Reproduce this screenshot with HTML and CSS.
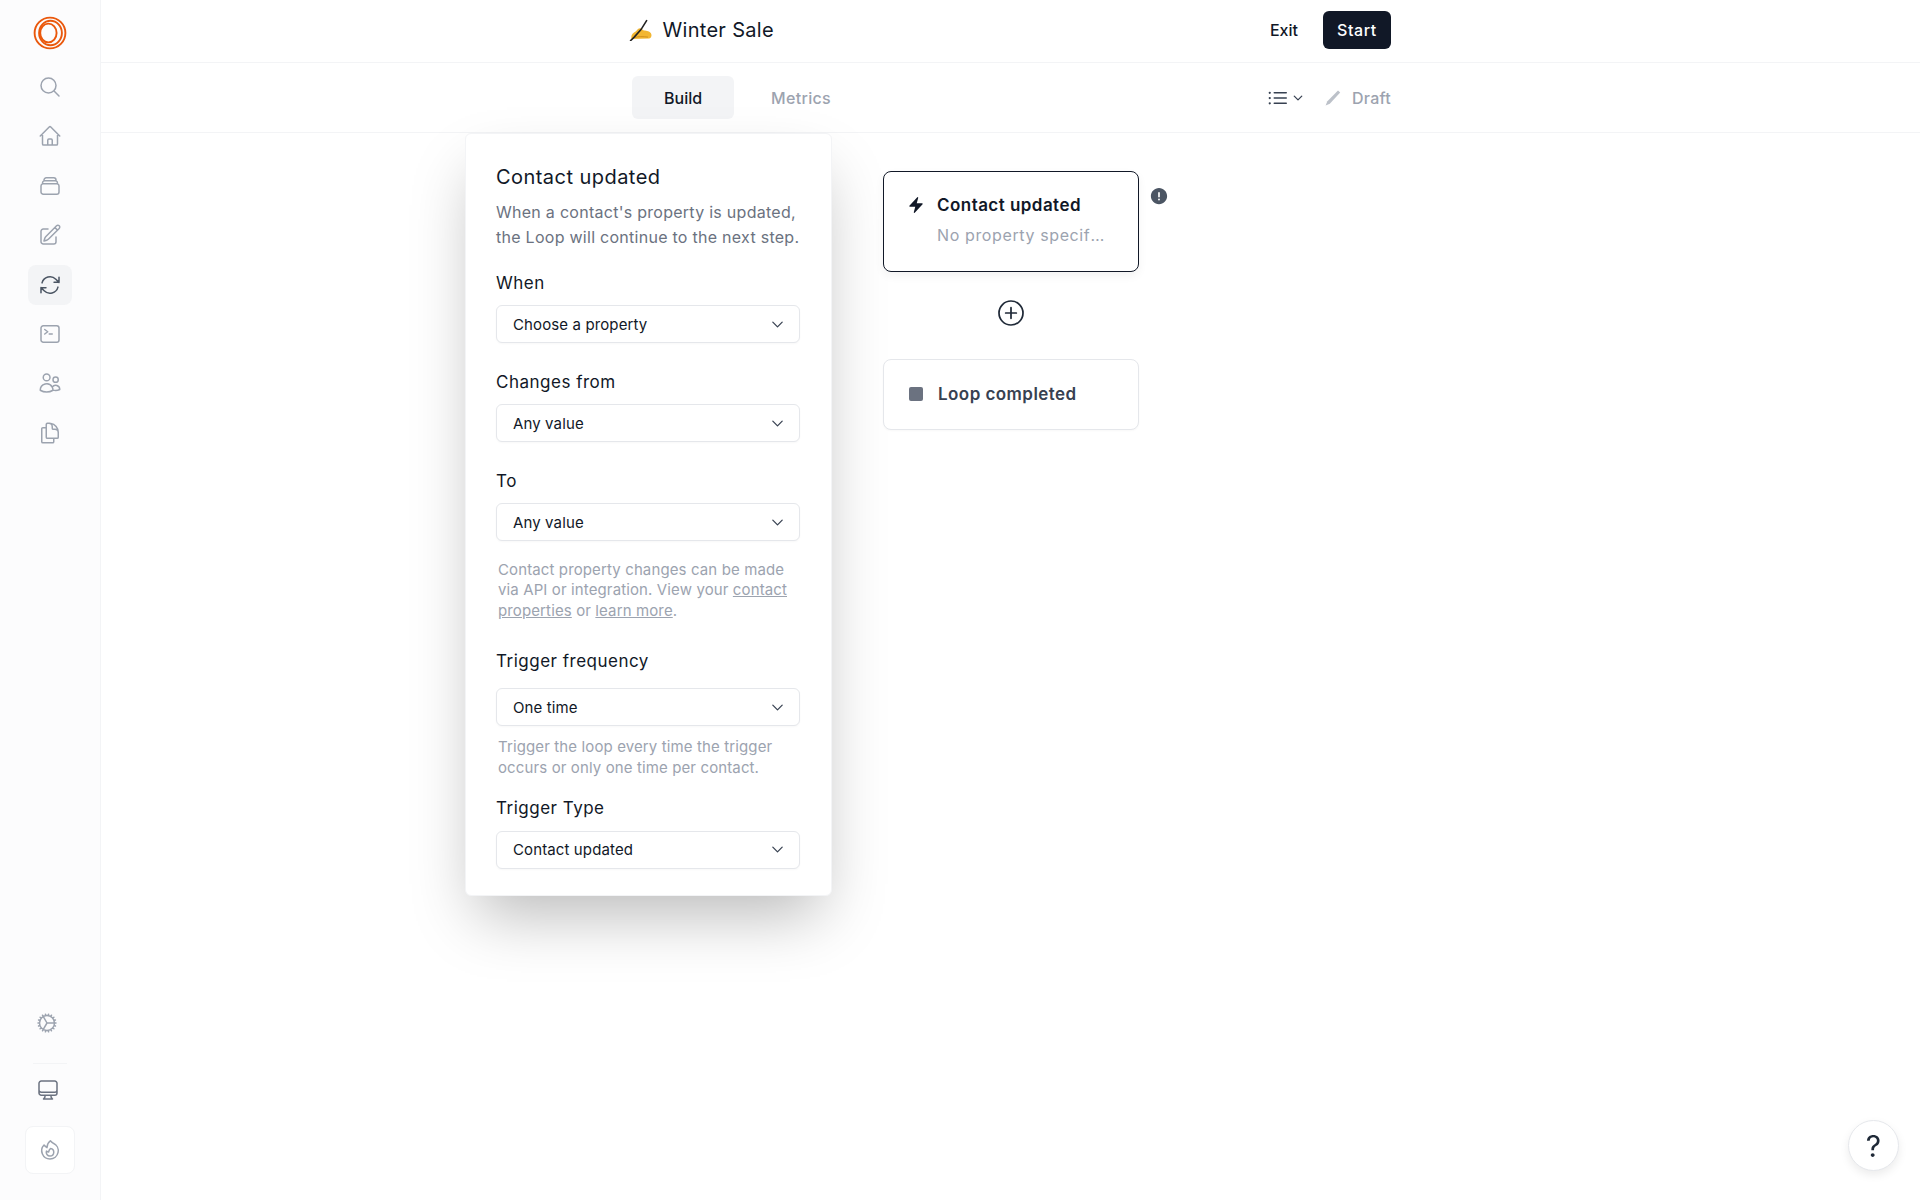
FILE: index.html
```html
<!DOCTYPE html>
<html lang="en">
<head>
<meta charset="utf-8">
<title>Winter Sale</title>
<link rel="stylesheet" href="styles.css">
</head>
<body>
<div class="app">
  <aside class="sidebar">
    <div class="logo">
      <svg viewBox="0 0 34 34" width="34" height="34" fill="none" stroke="#ea580c" stroke-width="1.9">
        <circle cx="17" cy="17" r="15.4"/>
        <ellipse cx="17.5" cy="17" rx="11.4" ry="12.2"/>
        <ellipse cx="15.4" cy="17" rx="8.2" ry="9.4"/>
      </svg>
    </div>
    <nav class="nav">
      <a class="nav-item"><svg class="ico" viewBox="0 0 24 24"><path d="m21 21-5.197-5.197m0 0A7.5 7.5 0 1 0 5.196 5.196a7.5 7.5 0 0 0 10.607 10.607Z"/></svg></a>
      <a class="nav-item"><svg class="ico" viewBox="0 0 24 24"><path d="m2.25 12 8.954-8.955c.44-.439 1.152-.439 1.591 0L21.75 12M4.5 9.75v10.125c0 .621.504 1.125 1.125 1.125H9.75v-4.875c0-.621.504-1.125 1.125-1.125h2.25c.621 0 1.125.504 1.125 1.125V21h4.125c.621 0 1.125-.504 1.125-1.125V9.75M8.25 21h8.25"/></svg></a>
      <a class="nav-item"><svg class="ico" viewBox="0 0 24 24"><path d="M6 6.878V6a2.25 2.25 0 0 1 2.25-2.25h7.5A2.25 2.25 0 0 1 18 6v.878m-12 0c.235-.083.487-.128.75-.128h10.5c.263 0 .515.045.75.128m-12 0A2.25 2.25 0 0 0 4.5 9v.878m13.5-3A2.25 2.25 0 0 1 19.5 9v.878m0 0a2.246 2.246 0 0 0-.75-.128H5.25c-.263 0-.515.045-.75.128m15 0A2.25 2.25 0 0 1 21 12v6a2.25 2.25 0 0 1-2.25 2.25H5.25A2.25 2.25 0 0 1 3 18v-6c0-.98.626-1.813 1.5-2.122"/></svg></a>
      <a class="nav-item"><svg class="ico" viewBox="0 0 24 24"><path d="m16.862 4.487 1.687-1.688a1.875 1.875 0 1 1 2.652 2.652L10.582 16.07a4.5 4.5 0 0 1-1.897 1.13L6 18l.8-2.685a4.5 4.5 0 0 1 1.13-1.897l8.932-8.931Zm0 0L19.5 7.125M18 14v4.75A2.25 2.25 0 0 1 15.75 21H5.25A2.25 2.25 0 0 1 3 18.75V8.25A2.25 2.25 0 0 1 5.25 6H10"/></svg></a>
      <a class="nav-item active"><svg class="ico" viewBox="0 0 24 24"><path d="M16.023 9.348h4.992v-.001M2.985 19.644v-4.992m0 0h4.992m-4.993 0 3.181 3.183a8.25 8.25 0 0 0 13.803-3.7M4.031 9.865a8.25 8.25 0 0 1 13.803-3.7l3.181 3.182m0-4.991v4.99"/></svg></a>
      <a class="nav-item"><svg class="ico" viewBox="0 0 24 24"><path d="m6.75 7.5 3 2.25-3 2.25m4.5 0h3m-9 8.25h13.5A2.25 2.25 0 0 0 21 18V6a2.25 2.25 0 0 0-2.25-2.25H5.25A2.25 2.25 0 0 0 3 6v12a2.25 2.25 0 0 0 2.25 2.25Z"/></svg></a>
      <a class="nav-item"><svg class="ico" viewBox="0 0 24 24"><path d="M15 19.128a9.38 9.38 0 0 0 2.625.372 9.337 9.337 0 0 0 4.121-.952 4.125 4.125 0 0 0-7.533-2.493M15 19.128v-.003c0-1.113-.285-2.16-.786-3.07M15 19.128v.106A12.318 12.318 0 0 1 8.624 21c-2.331 0-4.512-.645-6.374-1.766l-.001-.109a6.375 6.375 0 0 1 11.964-3.07M12 6.375a3.375 3.375 0 1 1-6.75 0 3.375 3.375 0 0 1 6.75 0Zm8.25 2.25a2.625 2.625 0 1 1-5.25 0 2.625 2.625 0 0 1 5.25 0Z"/></svg></a>
      <a class="nav-item"><svg class="ico" viewBox="0 0 24 24"><path d="M15.75 17.25v3.375c0 .621-.504 1.125-1.125 1.125h-9.75a1.125 1.125 0 0 1-1.125-1.125V7.875c0-.621.504-1.125 1.125-1.125H6.75a9.06 9.06 0 0 1 1.5.124m7.5 10.376h3.375c.621 0 1.125-.504 1.125-1.125V11.25c0-4.46-3.243-8.161-7.5-8.876a9.06 9.06 0 0 0-1.5-.124H9.375c-.621 0-1.125.504-1.125 1.125v3.5m7.5 10.375H9.375a1.125 1.125 0 0 1-1.125-1.125v-9.25m12 6.625v-1.875a3.375 3.375 0 0 0-3.375-3.375h-1.5a1.125 1.125 0 0 1-1.125-1.125v-1.5a3.375 3.375 0 0 0-3.375-3.375H9.75"/></svg></a>
    </nav>
    <div class="side-bottom">
      <a class="gear"><svg class="ico" viewBox="0 0 24 24"><path d="M4.5 12a7.5 7.5 0 0 0 15 0m-15 0a7.5 7.5 0 1 1 15 0m-15 0H3m16.5 0H21m-1.5 0H12m-8.457 3.077 1.41-.513m14.095-5.13 1.41-.513M5.106 17.785l1.15-.964m11.49-9.642 1.149-.964M7.501 19.795l.75-1.3m7.5-12.99.75-1.3m-6.063 16.658.26-1.477m2.605-14.772.26-1.477m0 17.726-.26-1.477M10.698 4.614l-.26-1.477M16.5 19.794l-.75-1.299M7.5 4.205 12 12m6.894 5.785-1.149-.964M6.256 7.178l-1.15-.964m15.352 8.864-1.41-.513M4.954 9.435l-1.41-.514M12.002 12l-3.75 6.495"/></svg></a>
      <div class="side-rule"></div>
      <a class="desktop"><svg class="ico dark" viewBox="0 0 24 24"><path d="M9 17.25v1.007a3 3 0 0 1-.879 2.122L7.5 21h9l-.621-.621A3 3 0 0 1 15 18.257V17.25m6-12V15a2.25 2.25 0 0 1-2.25 2.25H5.25A2.25 2.25 0 0 1 3 15V5.25m18 0A2.25 2.25 0 0 0 18.75 3H5.25A2.25 2.25 0 0 0 3 5.25m18 0V12a2.25 2.25 0 0 1-2.25 2.25H5.25A2.25 2.25 0 0 1 3 12V5.25"/></svg></a>
      <a class="fire"><svg class="ico" viewBox="0 0 24 24"><path d="M15.362 5.214A8.252 8.252 0 0 1 12 21 8.25 8.25 0 0 1 6.038 7.047 8.287 8.287 0 0 0 9 9.601a8.983 8.983 0 0 1 3.361-6.867 8.21 8.21 0 0 0 3 2.48Z"/><path d="M12 18a3.75 3.75 0 0 0 .495-7.468 5.99 5.99 0 0 0-1.925 3.547 5.975 5.975 0 0 1-2.133-1.001A3.75 3.75 0 0 0 12 18Z"/></svg></a>
    </div>
  </aside>

  <main class="main">
    <header class="topbar">
      <div class="bar-inner">
        <div class="title">
          <svg class="emoji" viewBox="0 0 24 24" width="24" height="24">
            <path d="M2.6 22c-.8-2.4.2-5 2.4-6.4 1.2-.8 2-1.2 2.8-2.4.9-1.2 2-2 3.2-2 1 0 1.6.6 2.4 1.4l1.4.8c1.6.2 3 .2 4.4.8 1.6.7 2.8 1.6 3.2 3.2.4 1.7-.4 3.6-2.2 4z" fill="#f2b632"/>
            <path d="M6 20.5c3-1.2 8-1 13-.4" stroke="#d18f1c" stroke-width="1" fill="none"/>
            <path d="M1.6 23.6 5 20.4 12 12.6 17.6 3.6" stroke="#222" stroke-width="1.6" stroke-linecap="round" fill="none"/>
          </svg>
          <span>Winter Sale</span>
        </div>
        <div class="actions">
          <a class="exit">Exit</a>
          <button class="start">Start</button>
        </div>
      </div>
    </header>
    <div class="subbar">
      <div class="bar-inner">
        <div class="tabs">
          <a class="tab current">Build</a>
          <a class="tab">Metrics</a>
        </div>
        <div class="status">
          <span class="list-btn">
            <svg class="list-ico" viewBox="0 0 24 24"><path d="M8.25 6.75h12M8.25 12h12m-12 5.25h12M3.75 6.75h.007v.008H3.75V6.75Zm.375 0a.375.375 0 1 1-.75 0 .375.375 0 0 1 .75 0ZM3.75 12h.007v.008H3.75V12Zm.375 0a.375.375 0 1 1-.75 0 .375.375 0 0 1 .75 0Zm-.375 5.25h.007v.008H3.75v-.008Zm.375 0a.375.375 0 1 1-.75 0 .375.375 0 0 1 .75 0Z"/></svg>
            <svg class="mini-chev" viewBox="0 0 24 24"><path d="m19.5 8.25-7.5 7.5-7.5-7.5"/></svg>
          </span>
          <span class="draft">
            <svg class="draft-ico" viewBox="0 0 18 18"><path d="M1.6 16.6 3.4 12.2 14 1.6 16.2 3.6 5.8 14.8Z"/></svg>
            Draft
          </span>
        </div>
      </div>
    </div>

    <section class="canvas">
      <form class="panel">
        <h2 class="panel-title">Contact updated</h2>
        <p class="panel-desc">When a contact's property is updated, the Loop will continue to the next step.</p>

        <label class="label l-when">When</label>
        <div class="select"><span>Choose a property</span><svg class="chev" viewBox="0 0 24 24"><path d="m19.5 8.25-7.5 7.5-7.5-7.5"/></svg></div>

        <label class="label l-next">Changes from</label>
        <div class="select"><span>Any value</span><svg class="chev" viewBox="0 0 24 24"><path d="m19.5 8.25-7.5 7.5-7.5-7.5"/></svg></div>

        <label class="label l-next">To</label>
        <div class="select"><span>Any value</span><svg class="chev" viewBox="0 0 24 24"><path d="m19.5 8.25-7.5 7.5-7.5-7.5"/></svg></div>

        <p class="help h-one">Contact property changes can be made via API or integration. View your <a>contact properties</a> or <a>learn more</a>.</p>

        <label class="label l-freq">Trigger frequency</label>
        <div class="select"><span>One time</span><svg class="chev" viewBox="0 0 24 24"><path d="m19.5 8.25-7.5 7.5-7.5-7.5"/></svg></div>

        <p class="help h-two">Trigger the loop every time the trigger occurs or only one time per contact.</p>

        <label class="label l-type">Trigger Type</label>
        <div class="select"><span>Contact updated</span><svg class="chev" viewBox="0 0 24 24"><path d="m19.5 8.25-7.5 7.5-7.5-7.5"/></svg></div>
      </form>

      <div class="flow">
        <div class="node-row">
          <div class="node selected">
            <svg class="bolt" viewBox="0 0 24 24"><path d="M14.615 1.595a.75.75 0 0 1 .359.852L12.982 9.75h7.268a.75.75 0 0 1 .548 1.262l-10.5 11.25a.75.75 0 0 1-1.272-.71l1.992-7.302H3.75a.75.75 0 0 1-.548-1.262l10.5-11.25a.75.75 0 0 1 .913-.143Z"/></svg>
            <div class="node-text">
              <div class="node-title">Contact updated</div>
              <div class="node-sub">No property specified</div>
            </div>
          </div>
          <svg class="alert" viewBox="0 0 24 24"><path fill-rule="evenodd" d="M2.25 12c0-5.385 4.365-9.75 9.75-9.75s9.75 4.365 9.75 9.75-4.365 9.75-9.75 9.75S2.25 17.385 2.25 12ZM12 7.25a1 1 0 0 1 1 1v4.5a1 1 0 0 1-2 0v-4.5a1 1 0 0 1 1-1Zm0 10a1.1 1.1 0 1 0 0-2.2 1.1 1.1 0 0 0 0 2.2Z"/></svg>
        </div>
        <div class="add"><svg class="add-ico" viewBox="0 0 24 24"><path d="M12 8v8m4-4H8m13 0a9 9 0 1 1-18 0 9 9 0 0 1 18 0Z"/></svg></div>
        <div class="node done">
          <span class="stop"></span>
          <div class="node-title muted">Loop completed</div>
        </div>
      </div>
    </section>
  </main>
  <button class="help-btn">?</button>
</div>
</body>
</html>
```
FILE: styles.css
```css
* { box-sizing: border-box; }
html, body { margin: 0; height: 100%; }
body { font-family: Inter, "Liberation Sans", sans-serif; color: #111827; background: #fff; }
.app { display: flex; height: 1200px; overflow: hidden; }

.sidebar { width: 101px; flex: none; background: #fcfcfd; border-right: 1px solid #f3f4f6; display: flex; flex-direction: column; align-items: center; padding-top: 16px; padding-bottom: 26px; }
.logo { height: 34px; margin-bottom: 17px; }
.logo svg { display: block; }
.nav { display: flex; flex-direction: column; gap: 9.4px; align-items: center; }
.nav-item { width: 44px; height: 40px; border-radius: 8px; display: flex; align-items: center; justify-content: center; }
.nav-item.active { background: #f3f4f6; }
.nav-item.active .ico { stroke: #4b5563; }
.ico { width: 24px; height: 24px; fill: none; stroke: #9ca3af; stroke-width: 1.5; stroke-linecap: round; stroke-linejoin: round; display: block; }
.ico.dark { stroke: #6b7280; }
.side-bottom { margin-top: auto; display: flex; flex-direction: column; align-items: center; }
.gear { margin-left: -6px; }
.side-rule { width: 34px; height: 1px; background: #f3f4f6; margin: 28px 0 14px; }
.desktop { margin-left: -4px; }
.fire { width: 50px; height: 48px; margin-top: 24px; background: #fff; border: 1px solid #f3f4f6; border-radius: 8px; display: flex; align-items: center; justify-content: center; }

.main { flex: 1; min-width: 0; display: flex; flex-direction: column; }
.topbar { height: 63px; flex: none; padding-bottom: 2px; border-bottom: 1px solid #f3f4f6; }
.subbar { height: 70px; flex: none; border-bottom: 1px solid #f3f4f6; }
.bar-inner { width: 764px; height: 100%; margin: 0 auto; padding-right: 1.5px; display: flex; align-items: center; justify-content: space-between; }
.title { display: flex; align-items: center; gap: 10px; font-size: 20px; font-weight: 400; letter-spacing: .3px; }
.emoji { display: block; margin-top: -3px; }
.actions { display: flex; align-items: center; gap: 25px; }
.exit { font-size: 16px; font-weight: 450; }
.start { height: 38px; width: 68px; border: 0; border-radius: 6px; background: #111827; color: #fff; font: 500 16px Inter, sans-serif; letter-spacing: .6px; padding: 0; }

.subbar .bar-inner { padding-left: 3.5px; }
.tabs { display: flex; gap: 13px; }
.tab { height: 43px; padding: 0 32px; display: flex; align-items: center; font-size: 16px; font-weight: 450; color: #9ca3af; border-radius: 6px; }
.tab.current { background: #f3f4f6; color: #111827; }
.tab + .tab { padding: 0 24px; letter-spacing: .3px; }
.status { display: flex; align-items: center; gap: 20px; color: #9ca3af; font-size: 16px; font-weight: 450; }
.list-btn { display: flex; align-items: center; gap: 2px; }
.list-ico { width: 24px; height: 24px; fill: none; stroke: #374151; stroke-width: 1.5; stroke-linecap: round; stroke-linejoin: round; }
.mini-chev { width: 12px; height: 12px; fill: none; stroke: #374151; stroke-width: 2.5; stroke-linecap: round; stroke-linejoin: round; }
.draft { display: flex; align-items: center; gap: 10px; letter-spacing: .25px; }
.draft-ico { width: 18px; height: 18px; fill: #bcc1c9; }

.canvas { flex: 1; display: flex; align-items: flex-start; padding-left: 364px; }
.panel { width: 367px; height: 763px; flex: none; background: #fff; border: 1px solid #f3f4f6; border-radius: 6px; padding: 29px 31px 0 30px; box-shadow: 0 30px 60px -12px rgba(0,0,0,.28); display: flex; flex-direction: column; }
.panel-title { margin: 0; font-size: 20px; line-height: 28px; font-weight: 400; letter-spacing: .45px; color: #111827; }
.panel-desc { margin: 9px 0 0; font-size: 16px; line-height: 25px; color: #6b7280; letter-spacing: .27px; }
.label { display: block; font-size: 17px; line-height: 24px; font-weight: 400; letter-spacing: .5px; color: #111827; }
.l-when { margin-top: 21px; margin-bottom: 10px; }
.l-next { margin-top: 27px; margin-bottom: 10px; }
.l-freq { margin-top: 28px; margin-bottom: 15px; }
.l-type { margin-top: 18px; margin-bottom: 10.5px; }
.select { height: 38px; flex: none; border: 1px solid #e5e7eb; border-radius: 6px; padding: 0 14px 0 16px; display: flex; align-items: center; justify-content: space-between; font-size: 15px; letter-spacing: .12px; color: #111827; background: #fff; box-shadow: 0 1px 2px rgba(0,0,0,.03); }
.chev { width: 15px; height: 15px; fill: none; stroke: #374151; stroke-width: 2; stroke-linecap: round; stroke-linejoin: round; }
.help { margin: 0; padding-left: 2px; font-size: 15px; line-height: 20.5px; color: #9ca3af; letter-spacing: .12px; }
.help a { text-decoration: underline; }
.h-one { margin-top: 18.5px; }
.h-two { margin-top: 11px; }

.flow { margin-left: 51px; margin-top: 38px; display: flex; flex-direction: column; }
.node-row { display: flex; align-items: flex-start; }
.node { width: 256px; background: #fff; border-radius: 8px; display: flex; align-items: flex-start; padding: 21px 30px 0 23px; }
.node.selected { height: 101px; border: 1.5px solid #111827; box-shadow: 0 4px 10px rgba(0,0,0,.05); }
.node.done { height: 71px; border: 1px solid #e5e7eb; padding-top: 21.5px; box-shadow: 0 1px 2px rgba(0,0,0,.03); }
.bolt { width: 18px; height: 18px; flex: none; fill: #111827; margin-top: 3px; margin-right: 12px; }
.node-text { min-width: 0; flex: 1; }
.node-title { font-size: 17px; line-height: 24px; font-weight: 600; letter-spacing: .45px; color: #111827; }
.node-title.muted { color: #374151; }
.node-sub { margin-top: 6px; font-size: 16px; line-height: 24px; color: #9ca3af; letter-spacing: .62px; white-space: nowrap; overflow: hidden; text-overflow: ellipsis; }
.stop { width: 14px; height: 14px; flex: none; border-radius: 2px; background: #6b7280; margin: 5px 15px 0 2px; }
.alert { width: 20px; height: 20px; margin: 15px 0 0 10px; fill: #4b5563; }
.add { width: 256px; height: 87px; padding-bottom: 6px; display: flex; align-items: center; justify-content: center; }
.add-ico { width: 32px; height: 32px; fill: none; stroke: #1f2937; stroke-width: 1.3; stroke-linecap: round; stroke-linejoin: round; }

.help-btn { position: fixed; right: 21px; bottom: 29px; width: 51px; height: 51px; border-radius: 50%; background: #fff; border: 1px solid #e5e7eb; box-shadow: 0 4px 10px rgba(0,0,0,.08); font: 400 30px Inter, sans-serif; color: #1f2937; padding: 0; }
```
